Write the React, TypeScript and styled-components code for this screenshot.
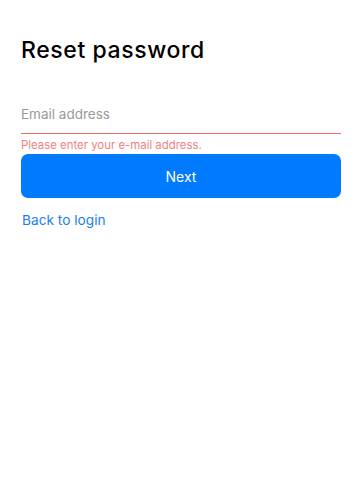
import React, { useState } from 'react';
import styled, { createGlobalStyle } from 'styled-components';

const GlobalStyle = createGlobalStyle`
  html, body {
    margin: 0;
    padding: 0;
    background: #FFFFFF;
  }
  body {
    font-family: Inter, "Noto Sans", sans-serif;
  }
`

const Page = styled.div`
  width: 358px;
  height: 490px;
  box-sizing: border-box;
  padding: 36px 17px 0 21px;
  display: flex;
  flex-direction: column;
`

const Title = styled.h1`
  margin: 0;
  font-size: 23px;
  line-height: 28px;
  font-weight: 500;
  color: #000000;
  letter-spacing: 0.6px;
`

const Field = styled.div`
  margin-top: 41px;
  display: flex;
  flex-direction: column;
`

const Input = styled.input<{ $error?: boolean }>`
  border: none;
  border-bottom: 1px solid ${p => (p.$error ? '#F06A6A' : '#CCCCCC')};
  outline: none;
  padding: 0 0 10px 0;
  height: 29px;
  box-sizing: border-box;
  font-family: Inter, "Noto Sans", sans-serif;
  font-size: 13.5px;
  color: #222222;
  background: transparent;

  &::placeholder {
    color: #9A9A9A;
  }
`

const ErrorText = styled.div`
  margin-top: 4px;
  font-size: 11.4px;
  line-height: 14px;
  color: #F27F84;
`

const PrimaryButton = styled.button`
  margin-top: 2px;
  height: 44px;
  width: 100%;
  border: none;
  border-radius: 7px;
  background: #007AFF;
  color: #FFFFFF;
  font-family: Inter, "Noto Sans", sans-serif;
  font-size: 14px;
  font-weight: 400;
  cursor: pointer;
`

const LinkButton = styled.a`
  margin-top: 13px;
  padding-left: 1px;
  font-size: 13.7px;
  line-height: 18px;
  color: #1A7FE8;
  text-decoration: none;
  align-self: flex-start;
  cursor: pointer;
`

const App = () => {
  const [email, setEmail] = useState('')

  return (
    <>
      <GlobalStyle />
      <Page>
        <Title>Reset password</Title>
        <Field>
          <Input
            $error={!email}
            placeholder="Email address"
            value={email}
            onChange={e => setEmail(e.target.value)}
          />
          {!email && <ErrorText>Please enter your e-mail address.</ErrorText>}
        </Field>
        <PrimaryButton>Next</PrimaryButton>
        <LinkButton>Back to login</LinkButton>
      </Page>
    </>
  )
}

export default App
